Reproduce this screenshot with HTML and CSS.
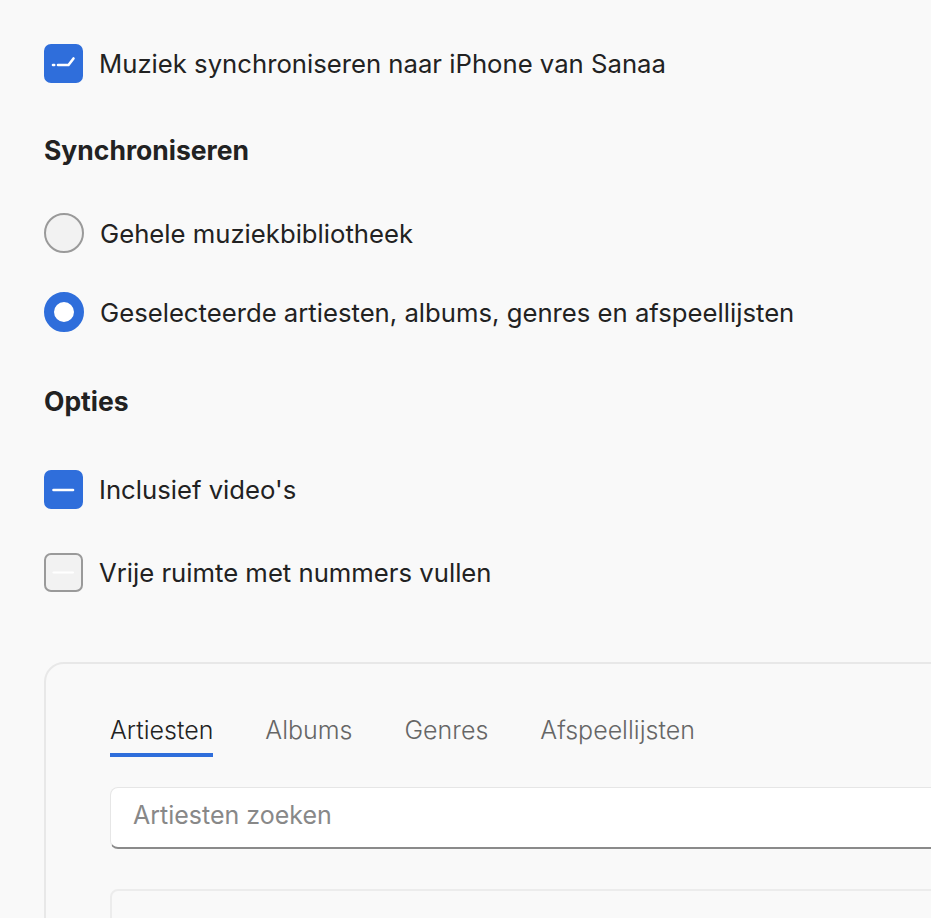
FILE: index.html
```html
<!DOCTYPE html>
<html lang="nl">
<head>
  <meta charset="UTF-8">
  <meta name="viewport" content="width=device-width, initial-scale=1.0">
  <title>Muziek synchroniseren</title>
  <link rel="stylesheet" href="styles.css">
</head>
<body>
  <div class="settings">
    <label class="row sync-toggle">
      <span class="checkbox checked">
        <svg viewBox="0 0 39 39" width="39" height="39"><path d="M9 21h1.2M14 21H24.5L29.5 14.5" fill="none" stroke="#fff" stroke-width="2.6" stroke-linecap="round" stroke-linejoin="round"/></svg>
      </span>
      <span>Muziek synchroniseren naar iPhone van Sanaa</span>
    </label>

    <div class="section-title first">Synchroniseren</div>
    <label class="row radio-row">
      <span class="radio"></span>
      <span>Gehele muziekbibliotheek</span>
    </label>
    <label class="row radio-row second">
      <span class="radio selected"></span>
      <span>Geselecteerde artiesten, albums, genres en afspeellijsten</span>
    </label>

    <div class="section-title">Opties</div>
    <label class="row option">
      <span class="checkbox checked">
        <svg viewBox="0 0 39 39" width="39" height="39"><path d="M9.5 20H29" fill="none" stroke="#fff" stroke-width="2.6" stroke-linecap="round"/></svg>
      </span>
      <span>Inclusief video's</span>
    </label>
    <label class="row option second">
      <span class="checkbox">
        <svg viewBox="0 0 39 39" width="39" height="39"><path d="M9.5 19.5H29" fill="none" stroke="#fff" stroke-width="2.2" stroke-linecap="round"/></svg>
      </span>
      <span>Vrije ruimte met nummers vullen</span>
    </label>
  </div>

  <div class="browser">
    <div class="tabs">
      <div class="tab active">Artiesten</div>
      <div class="tab">Albums</div>
      <div class="tab">Genres</div>
      <div class="tab">Afspeellijsten</div>
    </div>
    <input class="search" type="text" placeholder="Artiesten zoeken">
    <div class="list"></div>
  </div>
</body>
</html>
```

FILE: styles.css
```css
* {
  box-sizing: border-box;
}

html,
body {
  height: 100%;
}

body {
  margin: 0;
  padding: 43px 0 0 44px;
  overflow: hidden;
  background: #f9f9f9;
  color: #222;
  font-family: Inter, 'Noto Sans', sans-serif;
  font-size: 25.7px;
}

.row {
  display: flex;
  align-items: center;
  gap: 16px;
  height: 40px;
  white-space: nowrap;
}

.checkbox {
  width: 39px;
  height: 39px;
  border-radius: 7px;
  background: #f2f2f2;
  border: 2px solid #9a9a9a;
  position: relative;
  flex: none;
}

.checkbox svg {
  position: absolute;
  left: -2px;
  top: -2px;
}

.checkbox.checked {
  background: #2f6edb;
  border-color: #2f6edb;
}

.radio {
  width: 40px;
  height: 40px;
  border-radius: 50%;
  background: #f2f2f2;
  border: 2px solid #9a9a9a;
  flex: none;
}

.radio.selected {
  background: #fff;
  border: 10px solid #2f6edb;
}

.section-title {
  font-weight: 700;
  font-size: 26.5px;
  line-height: 30px;
  margin-top: 54px;
}

.section-title.first {
  margin-top: 52px;
}

.radio-row {
  margin-top: 48px;
}

.radio-row.second {
  margin-top: 39px;
}

.option {
  margin-top: 53px;
}

.option.second {
  margin-top: 43px;
}

/* panel with tabs */
.browser {
  margin-top: 70px;
  width: 1000px;
  height: 400px;
  border: 2px solid #e8e8e8;
  border-radius: 20px;
  padding: 51px 0 0 64px;
}

.tabs {
  display: flex;
  gap: 52px;
  font-size: 25px;
}

.tab {
  line-height: 30px;
  padding-bottom: 8px;
  border-bottom: 4px solid transparent;
  color: #666;
  font-weight: 300;
}

.tab.active {
  color: #222;
  border-bottom-color: #2f6edb;
}

.search {
  display: block;
  margin-top: 30px;
  width: 100%;
  height: 62px;
  border: 1px solid #e6e6e6;
  border-bottom: 2px solid #8a8a8a;
  border-radius: 8px;
  background: #fff;
  padding: 0 0 5px 22px;
  font: inherit;
  font-size: 25px;
  color: #222;
  outline: none;
}

.search::placeholder {
  color: #888;
}

.list {
  margin-top: 40px;
  height: 200px;
  border: 2px solid #ececec;
  border-radius: 8px;
}
```
